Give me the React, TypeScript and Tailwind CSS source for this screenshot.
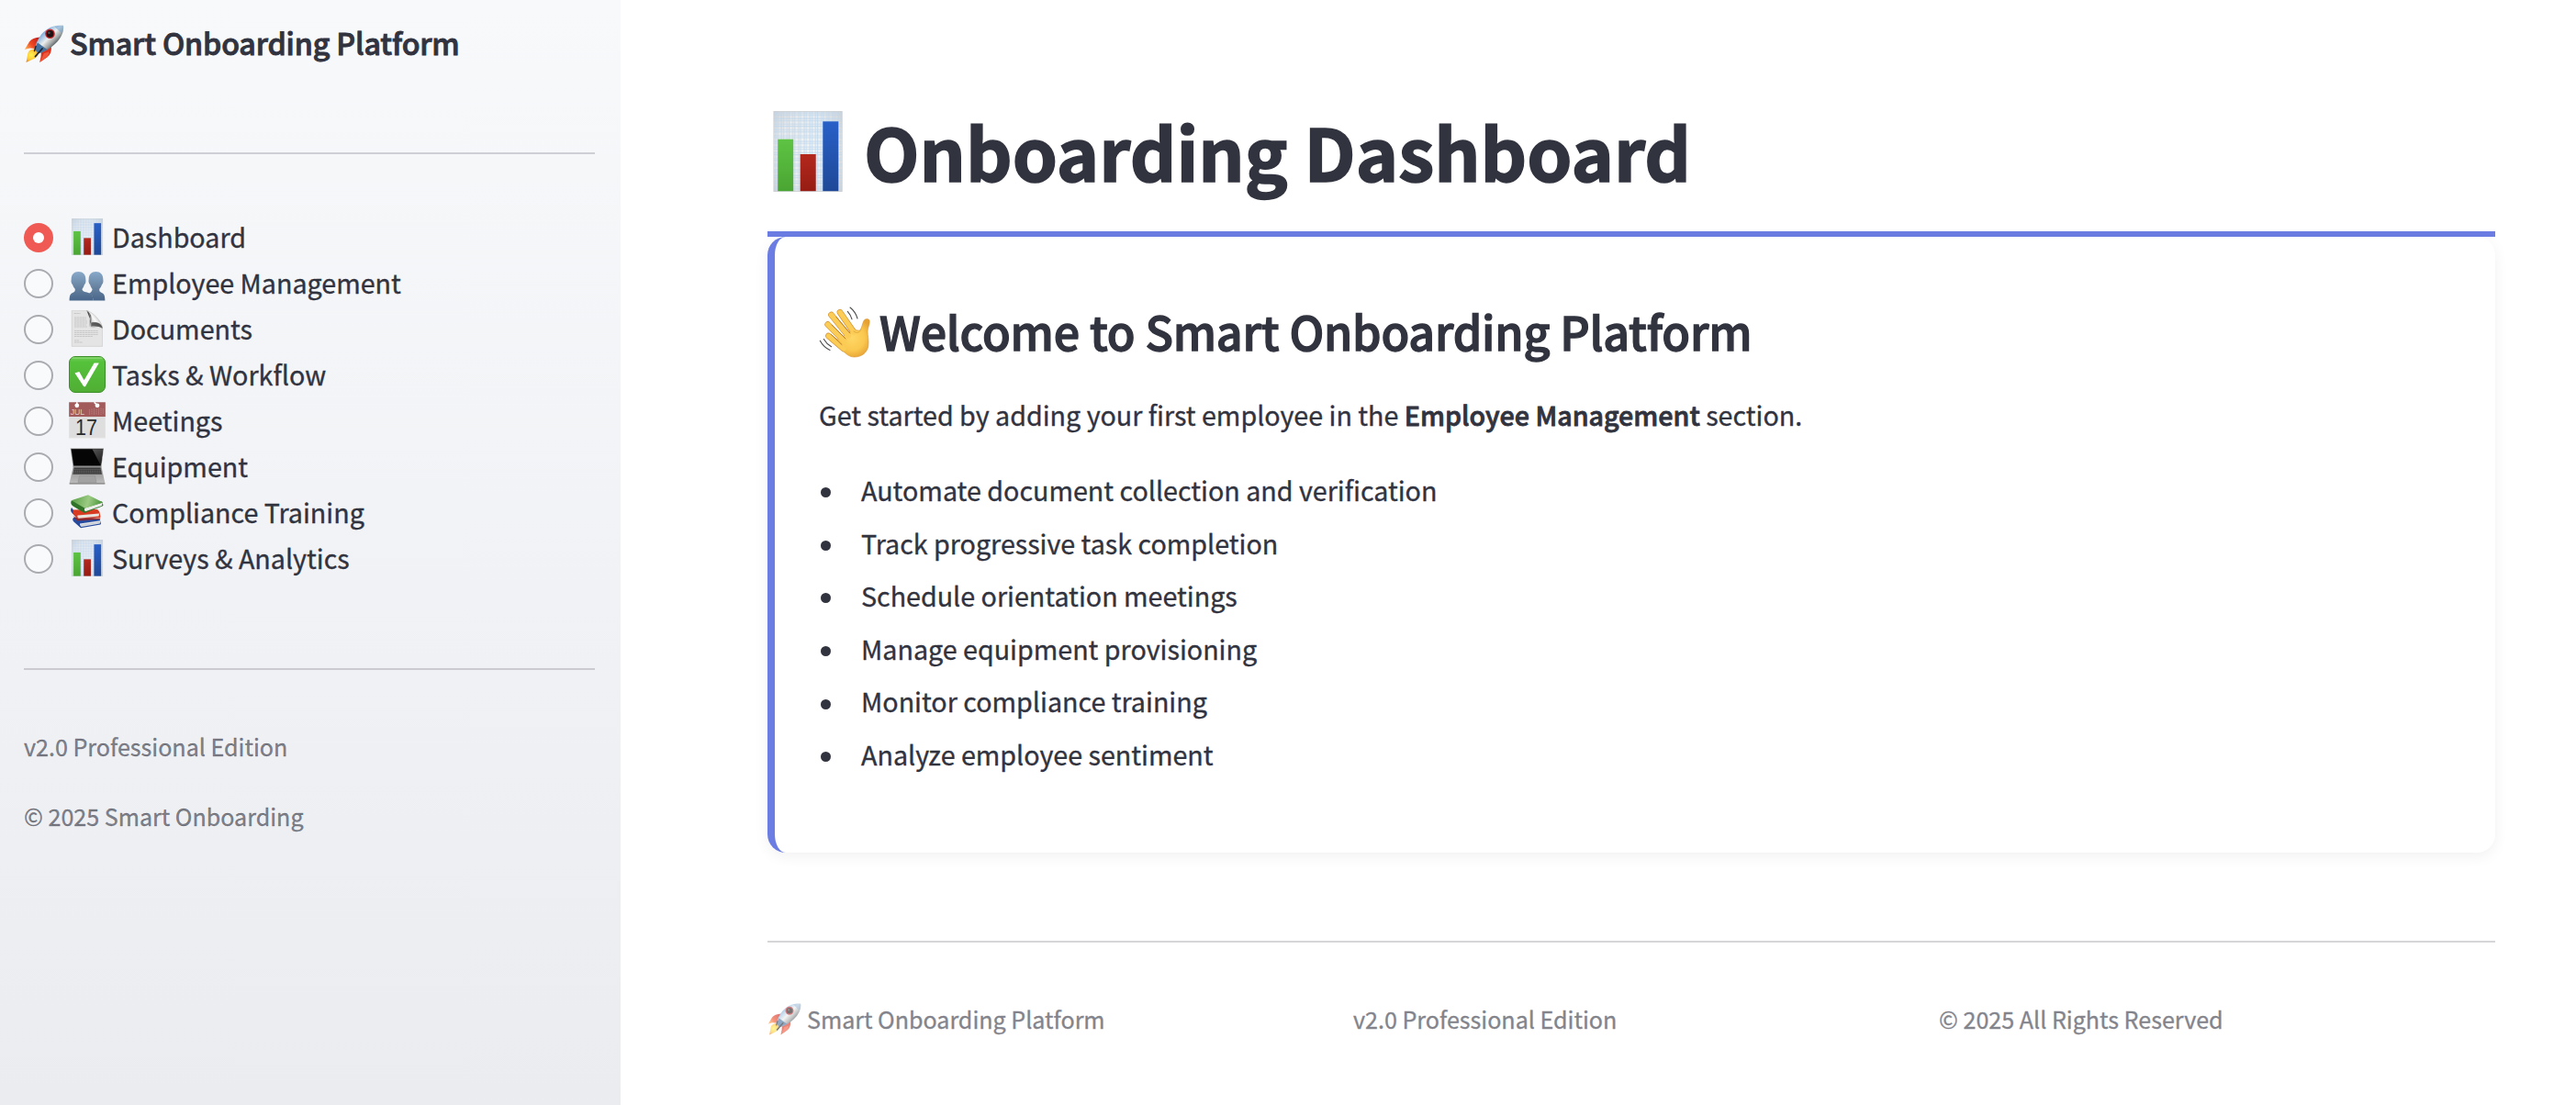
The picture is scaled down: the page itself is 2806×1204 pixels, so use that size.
import React, { useId } from 'react';

type IconProps = { className?: string };

function Rocket({ className }: IconProps) {
  const id = useId();
  return (
    <svg viewBox="0 0 44 44" className={className} aria-hidden="true">
      <defs>
        <linearGradient id={`${id}b`} x1="14" y1="7" x2="31" y2="24" gradientUnits="userSpaceOnUse">
          <stop offset="0" stopColor="#3f78b5" />
          <stop offset="0.35" stopColor="#9dc0e2" />
          <stop offset="0.6" stopColor="#eceeec" />
          <stop offset="0.85" stopColor="#9fa3a3" />
          <stop offset="1" stopColor="#5f6669" />
        </linearGradient>
        <linearGradient id={`${id}f`} x1="16" y1="15" x2="2" y2="27" gradientUnits="userSpaceOnUse">
          <stop offset="0" stopColor="#c41f1a" />
          <stop offset="0.55" stopColor="#ef4a22" />
          <stop offset="1" stopColor="#ffb45a" />
        </linearGradient>
        <radialGradient id={`${id}y`} cx="8" cy="33" r="9" gradientUnits="userSpaceOnUse">
          <stop offset="0" stopColor="#fff34f" />
          <stop offset="0.6" stopColor="#fcc637" />
          <stop offset="1" stopColor="#e97a22" />
        </radialGradient>
      </defs>
      <path d="M18 13.6C12 14 8 15.5 6 18.5L.8 27l5.5-1.600 7.200.6z" fill={`url(#${id}f)`} />
      <path d="M29.800 24c.5 5-1.300 9-4.300 11.200L17.200 41l1.300-6 .5-7z" fill="#d9321f" />
      <path d="M22 31l-4.500 9.500L25 35.500c1.500-1.500 2.500-3.500 2.500-6z" fill="#f0573a" />
      <path d="M12.500 26.500C7 26.500 4.500 28.500 4 33l-1.500 8 7.500-3.500c4-1.500 6-4 5.500-8z" fill={`url(#${id}y)`} />
      <path d="M43 .8C34 -.6 25.500 3.300 19.300 10.300 15.500 15 12.800 21 11.800 27l4.200 4.200c6.500-1.600 13.300-5.600 18.300-10.600C41 13.700 44 7 43 .8z" fill={`url(#${id}b)`} />
      <path d="M43 .8c-3.300-.4-6.600 0-9.700 1.100l8.200 7.600c1.300-2.900 1.800-5.800 1.500-8.700z" fill="#6fa0cf" opacity="0.55" />
      <path d="M15 19.500l10.500 7.500c-3 1.800-6.400 3.300-9.500 4.200L11.800 27c.5-2.600 1.700-5.200 3.200-7.500z" fill="#4571a0" />
      <path d="M20 26l-7.500 8.500" stroke="#20242c" strokeWidth="1.800" strokeLinecap="round" />
      <path d="M13 23.500l-1.500 5" stroke="#20242c" strokeWidth="1.400" strokeLinecap="round" />
      <circle cx="28.500" cy="9.800" r="5.300" fill="#c1272b" />
      <circle cx="28.500" cy="9.800" r="3.900" fill="#1c1214" />
      <circle cx="27.500" cy="8.800" r="1.300" fill="#5a4d4d" />
    </svg>
  );
}

function BarChart({ className }: IconProps) {
  const id = useId();
  return (
    <svg viewBox="0 0 88 88" className={className} aria-hidden="true">
      <defs>
        <pattern id={`${id}g`} x="8" y="1" width="6.200" height="6.200" patternUnits="userSpaceOnUse">
          <path d="M0 1h6.200M0 3.300h6.200M1 0v6.200M3.300 0v6.200" stroke="#bdd6ec" strokeWidth="0.800" fill="none" />
        </pattern>
        <radialGradient id={`${id}p`} cx="0.5" cy="0.5" r="0.750">
          <stop offset="0" stopColor="#f6f6f5" />
          <stop offset="0.6" stopColor="#eaebec" />
          <stop offset="1" stopColor="#c9cccf" />
        </radialGradient>
        <linearGradient id={`${id}1`} x1="0" y1="0" x2="0" y2="1">
          <stop offset="0" stopColor="#5ec444" />
          <stop offset="1" stopColor="#4aa532" />
        </linearGradient>
        <linearGradient id={`${id}2`} x1="0" y1="0" x2="0" y2="1">
          <stop offset="0" stopColor="#b3281d" />
          <stop offset="1" stopColor="#961c13" />
        </linearGradient>
        <linearGradient id={`${id}3`} x1="0" y1="0" x2="0" y2="1">
          <stop offset="0" stopColor="#2860c8" />
          <stop offset="1" stopColor="#1f4897" />
        </linearGradient>
      </defs>
      <rect x="6.900" y="0.300" width="74.300" height="87.400" fill={`url(#${id}p)`} />
      <rect x="6.900" y="0.300" width="74.300" height="87.400" fill={`url(#${id}g)`} stroke="#c6c9cb" strokeWidth="0.700" />
      <rect x="11.200" y="30.700" width="17" height="56.500" fill={`url(#${id}1)`} />
      <rect x="35.700" y="47" width="17" height="40.200" fill={`url(#${id}2)`} />
      <rect x="60.300" y="11.300" width="17" height="75.900" fill={`url(#${id}3)`} />
    </svg>
  );
}

function Busts({ className }: IconProps) {
  const id = useId();
  return (
    <svg viewBox="0 0 40 40" className={className} aria-hidden="true">
      <defs>
        <linearGradient id={`${id}a`} x1="0" y1="8" x2="0" y2="40" gradientUnits="userSpaceOnUse">
          <stop offset="0" stopColor="#88a9ca" />
          <stop offset="0.55" stopColor="#66819f" />
          <stop offset="1" stopColor="#47658a" />
        </linearGradient>
      </defs>
      <path d="M10.500 8C5.600 8 2.700 11.200 2.700 16c0 1.400-.5 2 .1 4 .4 1.500 1.200 1.700 1.600 3 .6 1.800 1.500 3 2.300 3.800.4 2-.2 3.200-2 3.900C1.700 31.900.7 33.300.6 39.600h25.800c-.1-5.200-1-6.900-3.900-8.200-3.600-1.500-7.500-1-8.100-4.400.9-.9 1.600-2.200 2.200-4 .4-1.300 1.200-1.500 1.600-3 .6-2 .1-2.600.1-4 0-4.800-2.900-8-7.800-8z" fill={`url(#${id}a)`} />
      <path d="M29.500 8c4.900 0 7.800 3.200 7.800 8 0 1.400.5 2-.1 4-.4 1.500-1.200 1.700-1.600 3-.6 1.800-1.500 3-2.300 3.800-.4 2 .2 3.200 2 3.900 3 1.200 4 2.600 4.100 8.900H26.400c-.1-5.200-1-6.900-3.900-8.200 1.500-.6 2.900-2.200 3.100-4.400-.9-.9-1.600-2.200-2.200-4-.4-1.300-1.200-1.500-1.600-3-.6-2-.1-2.600-.1-4 0-4.800 2.900-8 7.800-8z" fill={`url(#${id}a)`} />
      <path d="M22.500 31.400c2.500 1.100 3.500 2.400 3.800 5.500" stroke="#46617f" strokeWidth="0.500" fill="none" />
    </svg>
  );
}

function PageCurl({ className }: IconProps) {
  const id = useId();
  return (
    <svg viewBox="0 0 40 40" className={className} aria-hidden="true">
      <defs>
        <linearGradient id={`${id}s`} x1="29" y1="12" x2="25" y2="20" gradientUnits="userSpaceOnUse">
          <stop offset="0" stopColor="#4a4a4a" />
          <stop offset="0.500" stopColor="#8a8a8a" stopOpacity="0.8" />
          <stop offset="1" stopColor="#8a8a8a" stopOpacity="0" />
        </linearGradient>
        <linearGradient id={`${id}c`} x1="23" y1="14" x2="33" y2="7" gradientUnits="userSpaceOnUse">
          <stop offset="0" stopColor="#c4c4c4" />
          <stop offset="0.500" stopColor="#fafafa" />
          <stop offset="1" stopColor="#c2c2c2" />
        </linearGradient>
      </defs>
      <path d="M3.200.4H19c5 .3 17.500 12 17.500 19v20H3.200z" fill="#e4e4e4" stroke="#c9c9c9" strokeWidth="0.600" />
      <path d="M5.500 3.500h7M6 8h13M6 10h13M6 12h14M6 14h14M6 16h13M6 18h14M6 22.500h26M6 24.500h26M6 26.500h26M6 28.500h20M6 33h5M6 35h9" stroke="#bcbcbc" strokeWidth="0.700" strokeDasharray="2.500 0.400" />
      <path d="M19.500.6c3.500 1 4 5 3 14-.2 2.400-1.500 4-1 6 4-1.500 11-4 15-1.600-1-4-6-6.500-12-5.400z" fill={`url(#${id}s)`} />
      <path d="M19 .5c3.500 1.500 5 5 4.200 13.300l1.300-.2C25.500 7 24 2.300 19 .5z" fill="#686868" />
      <path d="M19.500.6c5 2.300 5.800 6.900 5 13 5.500-1 10.500 0 12 5.400C35.500 11.500 26 2 19.500.6z" fill={`url(#${id}c)`} stroke="#b5b5b5" strokeWidth="0.400" />
      <path d="M24.500 13.600c5.500-1 10.500 0 12 5.400v1.100c-3.500-2.800-8-3.300-12.300-2.300z" fill="#4f4f4f" opacity="0.800" />
    </svg>
  );
}

function CheckBox({ className }: IconProps) {
  const id = useId();
  return (
    <svg viewBox="0 0 40 40" className={className} aria-hidden="true">
      <defs>
        <linearGradient id={`${id}g`} x1="0" y1="0" x2="0" y2="1">
          <stop offset="0" stopColor="#6fcd55" />
          <stop offset="0.150" stopColor="#55c23b" />
          <stop offset="1" stopColor="#50ae34" />
        </linearGradient>
      </defs>
      <rect x="0.500" y="0.500" width="39" height="39" rx="6.500" fill={`url(#${id}g)`} stroke="#3c8f29" />
      <path d="M4 2.200h32" stroke="#9be084" strokeWidth="1.200" strokeLinecap="round" opacity="0.700" />
      <path d="M6.500 18.600l4.800-1.700 5.300 9.400 11-18.900h5.200L17.900 33.300h-1.600z" fill="#fff" />
    </svg>
  );
}

function Calendar({ className }: IconProps) {
  return (
    <svg viewBox="0 0 40 40" className={className} aria-hidden="true">
      <rect x="0.200" y="0.300" width="39.600" height="39.400" fill="#dedede" />
      <rect x="0.200" y="0.300" width="39.600" height="15.700" fill="#a25a5a" />
      <rect x="0.200" y="38.900" width="39.600" height="0.800" fill="#efefef" />
      <path d="M22.500 8v6M25 7.500v6.500M27.500 7v7M30 7.500v6.500M32.500 7v7M35 6.500v7.500M37.300 7v6" stroke="#b67979" strokeWidth="1" strokeDasharray="1.600 0.500" />
      <circle cx="8.800" cy="3.800" r="2.400" fill="#fff" />
      <path d="M8.800 3.500V.3" stroke="#fff" strokeWidth="1.600" />
      <circle cx="31" cy="3.800" r="2.400" fill="#fff" />
      <path d="M31 3.500L27.600.3" stroke="#fff" strokeWidth="1.600" />
      <text x="1.700" y="14" fontSize="9.300" textLength="15.500" lengthAdjust="spacingAndGlyphs" fill="#e4cccc" fontFamily="Liberation Sans, sans-serif">JUL</text>
      <text x="7" y="35.800" fontSize="24.500" textLength="24" lengthAdjust="spacingAndGlyphs" fill="#2b2b2b" fontFamily="Liberation Sans, sans-serif">17</text>
    </svg>
  );
}

function Laptop({ className }: IconProps) {
  const id = useId();
  return (
    <svg viewBox="0 0 40 40" className={className} aria-hidden="true">
      <defs>
        <linearGradient id={`${id}b`} x1="0" y1="20" x2="0" y2="39" gradientUnits="userSpaceOnUse">
          <stop offset="0" stopColor="#8e8e8e" />
          <stop offset="1" stopColor="#bcbcbc" />
        </linearGradient>
        <linearGradient id={`${id}r`} x1="26" y1="1" x2="37" y2="17" gradientUnits="userSpaceOnUse">
          <stop offset="0" stopColor="#555" />
          <stop offset="1" stopColor="#1d1d1d" />
        </linearGradient>
      </defs>
      <path d="M1.700.4h36.300L35.400 21H4.600z" fill="#8f8f8f" />
      <path d="M2.600 1.200h34.600L34.700 19.600H5.300z" fill="#050505" />
      <path d="M25.500 1.200h11.700l-2.400 18z" fill={`url(#${id}r)`} />
      <path d="M4.800 20.500h30.600L39.300 38v1.500H.7V38z" fill={`url(#${id}b)`} />
      <path d="M5.700 21.500h28.800l1.500 7.300H4.200z" fill="#3b3b3b" />
      <path d="M5.300 23.400h29.500M5 25.200h30.200M4.600 27h31" stroke="#979797" strokeWidth="0.500" strokeDasharray="1.300 0.700" />
      <path d="M11.500 30.500h17l1.500 7H10z" fill="#a2a2a2" stroke="#8d8d8d" strokeWidth="0.500" />
      <path d="M.7 38.200h38.600v1.400H.7z" fill="#858585" />
    </svg>
  );
}

function Books({ className }: IconProps) {
  const id = useId();
  return (
    <svg viewBox="0 0 40 40" className={className} aria-hidden="true">
      <defs>
        <linearGradient id={`${id}g`} x1="4" y1="6" x2="34" y2="14" gradientUnits="userSpaceOnUse">
          <stop offset="0" stopColor="#5aa048" />
          <stop offset="0.550" stopColor="#9ccb83" />
          <stop offset="1" stopColor="#4f9a3e" />
        </linearGradient>
      </defs>
      <path d="M5 26c-1.600 2-.6 4 1.500 5.500l6.500 5.700 21.500-3.700.5-.9-1.400-5-18-3z" fill="#274a9d" />
      <path d="M12 32.600l22.300-3.400-.6 3.200L13.500 36c-1.200-1-1.700-2.200-1.500-3.400z" fill="#dfe3e8" />
      <path d="M12.500 34.400l21-3.200" stroke="#a5abb5" strokeWidth="0.500" />
      <path d="M3 15c-1.600 2.300-1 4.700 1 6.500l6.500 6.500L8 22z" fill="#26408f" />
      <path d="M5 17.500c-1.300 2.500-.3 5 1.700 6.800l3 3.200L34 26l.5-1-1.200-5.500L31 17z" fill="#d93a22" />
      <path d="M9.500 23.500L33 21.400l-.4 3L10.500 26.700c-1-.8-1.400-2-1-3.200z" fill="#e7e3de" />
      <path d="M4.500 24l4.700 5.300L34 27.700l.4-1.300-24.200 1.300z" fill="#a32014" />
      <path d="M2.700 7.500c-1 2.400-.3 4.200 1.500 5.700L17 21l19.500-7.400 1-1.200-1.500-4z" fill="#2f7328" />
      <path d="M17.500 15.400L36.700 9.600l-.8 3.400L18 19.200c-1.200-1.200-1.400-2.600-.5-3.800z" fill="#eceeea" />
      <path d="M2.700 7.300L21 1.300l16.300 8.300L17.500 15.800z" fill={`url(#${id}g)`} />
    </svg>
  );
}

function WavingHand({ className }: IconProps) {
  const id = useId();
  const fingers = 'M10.500 32L27 46M9.700 19.500L28 38M13.500 9L32 32M23 6.300L38 28';
  return (
    <svg viewBox="0 0 56 56" className={className} aria-hidden="true">
      <defs>
        <radialGradient id={`${id}p`} cx="36" cy="34" r="23" gradientUnits="userSpaceOnUse">
          <stop offset="0" stopColor="#ffd766" />
          <stop offset="0.600" stopColor="#fac84f" />
          <stop offset="1" stopColor="#e6a133" />
        </radialGradient>
      </defs>
      <path d={fingers} stroke="#d18e2c" strokeWidth="6.600" strokeLinecap="round" fill="none" />
      <path d="M37.500 25.500c2-1 5.200 1.300 7 .5 2.300-1.600 2.300-6.500 4.500-10.500 1.400-2.700 6-2.700 6.200.5.300 3-2 7-2.200 11 0 4.500 1.700 10 .8 16-1 7-7 12-15.300 12-5 0-8.500-3-12.500-7L17 38z" fill={`url(#${id}p)`} stroke="#d6932d" strokeWidth="0.600" />
      <path d={fingers} stroke="#fbcc56" strokeWidth="5.400" strokeLinecap="round" fill="none" />
      <path d="M13.500 30.500l11.500 11M14 20l15 15M19 11.500L34 29" stroke="#bd7a22" strokeWidth="1" strokeLinecap="round" fill="none" />
      <path d="M38 27c3.500 2.500 6.500 2 8-2.500" stroke="#dfa038" strokeWidth="0.800" fill="none" strokeLinecap="round" />
      <path d="M31.300 5.300c2.200 2.400 3.700 5 4.700 8.500M34 1c4 3.200 6.700 7.300 8 12M1.300 37.300c2.500 4.700 6 8 10.700 10.300M5.300 35.500c2 3.500 4.700 6.200 8.300 8.200" stroke="#4b4b4d" strokeWidth="1.100" strokeLinecap="round" fill="none" />
    </svg>
  );
}

const navItems = [
  { label: 'Dashboard', Icon: BarChart },
  { label: 'Employee Management', Icon: Busts },
  { label: 'Documents', Icon: PageCurl },
  { label: 'Tasks & Workflow', Icon: CheckBox },
  { label: 'Meetings', Icon: Calendar },
  { label: 'Equipment', Icon: Laptop },
  { label: 'Compliance Training', Icon: Books },
  { label: 'Surveys & Analytics', Icon: BarChart },
];

const features = [
  'Automate document collection and verification',
  'Track progressive task completion',
  'Schedule orientation meetings',
  'Manage equipment provisioning',
  'Monitor compliance training',
  'Analyze employee sentiment',
];

function Divider({ className }: IconProps) {
  return <hr className={`h-[2px] border-0 bg-[#31333f]/20 ${className ?? ''}`} />;
}

function Radio({ checked }: { checked: boolean }) {
  return checked ? (
    <span className="flex size-8 shrink-0 items-center justify-center rounded-full bg-[#ef5b54]">
      <span className="size-3 rounded-full bg-white" />
    </span>
  ) : (
    <span className="size-8 shrink-0 rounded-full border-2 border-[#a9abb0] bg-[#f9fafb]" />
  );
}

function Sidebar() {
  return (
    <aside className="flex w-[676px] shrink-0 flex-col bg-linear-to-b from-[#f8f9fb] to-[#ebecf0] pt-6 pr-7 pl-[26px]">
      <h3 className="flex items-center gap-[6px] text-[32.250px] leading-[44px] font-medium tracking-[-0.15px] [-webkit-text-stroke:0.9px_currentColor]">
        <Rocket className="mt-[3px] -mb-[3px] size-11" />
        Smart Onboarding Platform
      </h3>
      <Divider className="mt-[98px]" />
      <nav className="mt-[66px]">
        {navItems.map(({ label, Icon }, i) => (
          <label key={label} className="flex h-[50px] items-center">
            <Radio checked={i === 0} />
            <span className="ml-[17px] flex items-center gap-[7px] pb-[2px] text-[28.670px] leading-[48px]">
              <Icon className="size-10" />
              {label}
            </span>
          </label>
        ))}
      </nav>
      <Divider className="mt-[94px]" />
      <p className="mt-[63px] text-[25.080px] leading-10 text-[#31333f]/60">v2.0 Professional Edition</p>
      <p className="mt-9 text-[25.080px] leading-10 text-[#31333f]/60">© 2025 Smart Onboarding</p>
    </aside>
  );
}

function WelcomeCard() {
  return (
    <section className="h-[671px] rounded-[20px] border-l-8 border-[#6b7de3] bg-white pt-[68px] pl-12 shadow-[0_4px_16px_rgba(0,0,0,0.06)]">
      <h2 className="flex items-center gap-[10px] text-[50.200px] leading-[68px] font-medium tracking-[-0.23px] [-webkit-text-stroke:1.300px_currentColor]">
        <WavingHand className="mt-[2px] -mb-[2px] size-14" />
        Welcome to Smart Onboarding Platform
      </h2>
      <p className="mt-[33px] text-[28.670px] leading-[50px]">
        Get started by adding your first employee in the{' '}
        <strong className="font-medium [-webkit-text-stroke:0.8px_currentColor]">Employee Management</strong> section.
      </p>
      <ul className="mt-7 text-[28.670px] leading-[57.600px]">
        {features.map((feature) => (
          <li key={feature} className="flex items-center">
            <span className="mt-[6px] mr-[33px] ml-[2px] size-[11px] rounded-full bg-[#31333f]" />
            {feature}
          </li>
        ))}
      </ul>
    </section>
  );
}

export default function App() {
  return (
    <div className="flex h-[1204px] w-[2806px] overflow-hidden bg-white font-['Noto_Sans_CJK_SC',sans-serif] text-[#31333f] [-webkit-text-stroke:0.350px_currentColor]">
      <Sidebar />
      <main className="flex grow flex-col pt-[111px] pr-[88px] pl-40">
        <h1 className="flex items-center gap-[17px] border-b-[6px] border-[#6b7de3] pb-[35px] text-[78.700px] leading-[106px] font-bold [-webkit-text-stroke:1.600px_currentColor]">
          <BarChart className="mt-[2px] size-[88px]" />
          Onboarding Dashboard
        </h1>
        <WelcomeCard />
        <Divider className="mt-24" />
        <footer className="mt-[63px] grid grid-cols-3 gap-8 text-[25.080px] leading-10 text-[#31333f] opacity-60">
          <span className="flex items-center gap-[6px]">
            <Rocket className="mt-[2px] size-[37px]" />
            Smart Onboarding Platform
          </span>
          <span>v2.0 Professional Edition</span>
          <span>© 2025 All Rights Reserved</span>
        </footer>
      </main>
    </div>
  );
}
